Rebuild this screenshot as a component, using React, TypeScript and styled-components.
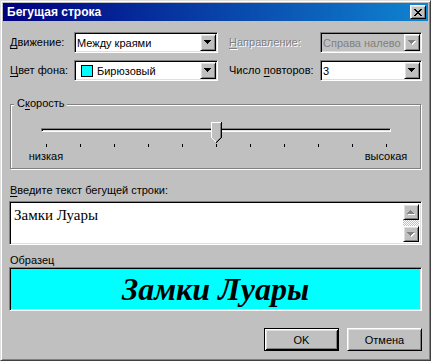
import React from "react";
import styled, { createGlobalStyle, css } from "styled-components";

const GlobalStyle = createGlobalStyle`
  html, body { margin: 0; padding: 0; background: #c0c0c0; }
  * { box-sizing: border-box; }
`;

const raised = css`
  border: 1px solid;
  border-color: #fff #000 #000 #fff;
  box-shadow: inset 1px 1px #dfdfdf, inset -1px -1px #808080;
`;

const sunken = css`
  border: 1px solid;
  border-color: #808080 #fff #fff #808080;
  box-shadow: inset 1px 1px #000, inset -1px -1px #dfdfdf;
`;

const Window = styled.div`
  width: 431px;
  height: 361px;
  background: #c0c0c0;
  border: 1px solid;
  border-color: #dfdfdf #404040 #404040 #dfdfdf;
  box-shadow: inset 1px 1px #fff, inset -1px -1px #808080;
  padding: 2px;
  display: flex;
  flex-direction: column;
  font-family: "Liberation Sans", Arial, sans-serif;
  font-size: 11px;
  color: #000;
`;

const TitleBar = styled.div`
  height: 18px;
  flex: none;
  display: flex;
  align-items: center;
  justify-content: space-between;
  padding: 0 2px 0 4px;
  background: linear-gradient(to right, #000080, #1084d0);
`;

const TitleText = styled.span`
  color: #fff;
  font-weight: bold;
  font-size: 12px;
  line-height: 18px;
  white-space: nowrap;
`;

const CloseButton = styled.div`
  width: 16px;
  height: 14px;
  background: #c0c0c0;
  ${raised};
  display: flex;
  align-items: center;
  justify-content: center;
`;

const Body = styled.div`
  flex: 1;
  display: flex;
  flex-direction: column;
  padding: 11px 6px 0 6px;
`;

const FormGrid = styled.div`
  display: grid;
  grid-template-columns: 65px 144px 102px 102px;
  grid-auto-rows: 21px;
  row-gap: 7px;
  align-items: center;
`;

const Label = styled.label<{ $indent?: number; $disabled?: boolean }>`
  padding-left: ${(p) => p.$indent ?? 1}px;
  white-space: nowrap;
  line-height: 13px;
  color: ${(p) => (p.$disabled ? "#808080" : "#000")};
  text-shadow: ${(p) => (p.$disabled ? "1px 1px 0 #fff" : "none")};
  u { text-decoration-thickness: 1px; text-underline-offset: 2px; }
`;

const Combo = styled.div<{ $disabled?: boolean }>`
  height: 21px;
  display: flex;
  align-items: stretch;
  padding: 1px;
  background: ${(p) => (p.$disabled ? "#c0c0c0" : "#fff")};
  ${sunken};
`;

const ComboValue = styled.div<{ $disabled?: boolean }>`
  flex: 1;
  display: flex;
  align-items: center;
  padding-left: 1px;
  white-space: nowrap;
  overflow: hidden;
  color: ${(p) => (p.$disabled ? "#808080" : "#000")};
`;

const Swatch = styled.span<{ $color: string }>`
  width: 12px;
  height: 12px;
  border: 1px solid #000;
  background: ${(p) => p.$color};
  margin: 0 4px 0 4px;
  flex: none;
`;

const DropButton = styled.div`
  width: 16px;
  flex: none;
  background: #c0c0c0;
  ${raised};
  display: flex;
  align-items: center;
  justify-content: center;
`;

const GroupBox = styled.div`
  position: relative;
  margin: 23px 1px 0 1px;
  border: 1px solid #808080;
  box-shadow: inset 1px 1px #fff, 1px 1px #fff;
  padding: 17px 0 5px 0;
`;

const GroupCaption = styled.span`
  position: absolute;
  top: -8px;
  left: 3px;
  padding: 0 2px 0 3px;
  background: #c0c0c0;
  line-height: 13px;
  u { text-decoration-thickness: 1px; text-underline-offset: 2px; }
`;

const SliderArea = styled.div`
  position: relative;
  margin-left: 30px;
  width: 350px;
  padding-top: 6px;
`;

const Track = styled.div`
  height: 4px;
  ${sunken};
`;

const Ticks = styled.div`
  margin: 12px 0 0 5px;
  width: 341px;
  height: 3px;
  display: flex;
  justify-content: space-between;
`;

const Tick = styled.span`
  width: 1px;
  height: 3px;
  background: #000;
`;

const ThumbWrap = styled.div`
  position: absolute;
  top: 0;
  width: 11px;
  height: 21px;
  line-height: 0;
`;

const ScaleLabels = styled.div`
  margin: 3px 0 0 5px;
  width: 400px;
  display: flex;
  justify-content: space-between;
  line-height: 13px;
`;

const ScaleLabel = styled.span`
  width: 60px;
  text-align: center;
`;

const FieldCaption = styled.div<{ $top: number; $bottom: number }>`
  margin: ${(p) => p.$top}px 0 ${(p) => p.$bottom}px 0;
  padding-left: 1px;
  line-height: 13px;
  u { text-decoration-thickness: 1px; text-underline-offset: 2px; }
`;

const TextArea = styled.div`
  height: 44px;
  display: flex;
  padding: 2px;
  background: #fff;
  ${sunken};
`;

const TextContent = styled.div`
  flex: 1;
  padding: 3px 2px;
  font-family: "Liberation Serif", "Times New Roman", serif;
  font-size: 15px;
  line-height: 17px;
`;

const ScrollBar = styled.div`
  width: 16px;
  display: flex;
  flex-direction: column;
`;

const ScrollButton = styled.div`
  width: 16px;
  height: 16px;
  background: #c0c0c0;
  ${raised};
  display: flex;
  align-items: center;
  justify-content: center;
`;

const ScrollTrack = styled.div`
  flex: 1;
  background: repeating-conic-gradient(#fff 0 25%, #c0c0c0 0 50%) 0 0 / 2px 2px;
`;

const Sample = styled.div`
  height: 44px;
  background: #00ffff;
  ${sunken};
  display: flex;
  align-items: center;
  justify-content: center;
  font-family: "Liberation Serif", "Times New Roman", serif;
  font-weight: bold;
  font-style: italic;
  font-size: 32px;
  line-height: 1;
`;

const ButtonRow = styled.div`
  margin-top: 17px;
  display: flex;
  justify-content: flex-end;
  gap: 8px;
`;

const Button = styled.button<{ $default?: boolean }>`
  width: 75px;
  height: 23px;
  padding: 0;
  font-family: "Liberation Sans", Arial, sans-serif;
  font-size: 11px;
  color: #000;
  background: #c0c0c0;
  border: 1px solid;
  border-color: ${(p) => (p.$default ? "#000" : "#fff #000 #000 #fff")};
  box-shadow: ${(p) =>
    p.$default
      ? "inset 1px 1px #fff, inset -1px -1px #000, inset 2px 2px #dfdfdf, inset -2px -2px #808080"
      : "inset 1px 1px #dfdfdf, inset -1px -1px #808080"};
`;

const Arrow: React.FC<{ down?: boolean; disabled?: boolean }> = ({ down = true, disabled }) => {
  const d = down
    ? "M0 0h7v1h-1v1h-1v1h-1v1h-1v-1h-1v-1h-1v-1h-1z"
    : "M3 0h1v1h1v1h1v1h1v1h-7v-1h1v-1h1v-1h1z";
  return (
    <svg width="8" height="5" viewBox="0 0 8 5" shapeRendering="crispEdges">
      {disabled && <path d={d} fill="#fff" transform="translate(1 1)" />}
      <path d={d} fill={disabled ? "#808080" : "#000"} />
    </svg>
  );
};

const CloseIcon = () => (
  <svg width="8" height="7" viewBox="0 0 8 7" shapeRendering="crispEdges">
    <path
      d="M0 0h2v1h1v1h2v-1h1v-1h2v1h-1v1h-1v1h-1v1h1v1h1v1h1v1h-2v-1h-1v-1h-2v1h-1v1h-2v-1h1v-1h1v-1h1v-1h-1v-1h-1v-1h-1z"
      fill="#000"
    />
  </svg>
);

const Thumb = () => (
  <svg width="11" height="21" viewBox="0 0 11 21" shapeRendering="crispEdges">
    <polygon points="0,0 11,0 11,16 5.5,21 0,16" fill="#c0c0c0" />
    <rect x="0" y="0" width="10" height="1" fill="#fff" />
    <rect x="0" y="0" width="1" height="16" fill="#fff" />
    <rect x="10" y="0" width="1" height="16" fill="#000" />
    <rect x="9" y="1" width="1" height="15" fill="#808080" />
    <rect x="1" y="16" width="1" height="1" fill="#fff" />
    <rect x="2" y="17" width="1" height="1" fill="#fff" />
    <rect x="3" y="18" width="1" height="1" fill="#fff" />
    <rect x="4" y="19" width="1" height="1" fill="#fff" />
    <rect x="9" y="16" width="1" height="1" fill="#000" />
    <rect x="8" y="17" width="1" height="1" fill="#000" />
    <rect x="7" y="18" width="1" height="1" fill="#000" />
    <rect x="6" y="19" width="1" height="1" fill="#000" />
    <rect x="5" y="20" width="1" height="1" fill="#000" />
    <rect x="8" y="16" width="1" height="1" fill="#808080" />
    <rect x="7" y="17" width="1" height="1" fill="#808080" />
    <rect x="6" y="18" width="1" height="1" fill="#808080" />
    <rect x="5" y="19" width="1" height="1" fill="#808080" />
  </svg>
);

const TICKS = 11;
const SPEED = 5;

export default function App() {
  const thumbLeft = 5 + SPEED * 34 - 5;
  return (
    <>
      <GlobalStyle />
      <Window>
        <TitleBar>
          <TitleText>Бегущая строка</TitleText>
          <CloseButton>
            <CloseIcon />
          </CloseButton>
        </TitleBar>
        <Body>
          <FormGrid>
            <Label>
              <u>Д</u>вижение:
            </Label>
            <Combo>
              <ComboValue>Между краями</ComboValue>
              <DropButton>
                <Arrow />
              </DropButton>
            </Combo>
            <Label $indent={11} $disabled>
              <u>Н</u>аправление:
            </Label>
            <Combo $disabled>
              <ComboValue $disabled>Справа налево</ComboValue>
              <DropButton>
                <Arrow disabled />
              </DropButton>
            </Combo>
            <Label>
              <u>Ц</u>вет фона:
            </Label>
            <Combo>
              <ComboValue>
                <Swatch $color="#00ffff" />
                Бирюзовый
              </ComboValue>
              <DropButton>
                <Arrow />
              </DropButton>
            </Combo>
            <Label $indent={11}>
              Число <u>п</u>овторов:
            </Label>
            <Combo>
              <ComboValue>3</ComboValue>
              <DropButton>
                <Arrow />
              </DropButton>
            </Combo>
          </FormGrid>

          <GroupBox>
            <GroupCaption>
              С<u>к</u>орость
            </GroupCaption>
            <SliderArea>
              <Track />
              <Ticks>
                {Array.from({ length: TICKS }).map((_, i) => (
                  <Tick key={i} />
                ))}
              </Ticks>
              <ThumbWrap style={{ left: thumbLeft }}>
                <Thumb />
              </ThumbWrap>
            </SliderArea>
            <ScaleLabels>
              <ScaleLabel>низкая</ScaleLabel>
              <ScaleLabel>высокая</ScaleLabel>
            </ScaleLabels>
          </GroupBox>

          <FieldCaption $top={15} $bottom={4}>
            <u>В</u>ведите текст бегущей строки:
          </FieldCaption>
          <TextArea>
            <TextContent>Замки Луары</TextContent>
            <ScrollBar>
              <ScrollButton>
                <Arrow down={false} disabled />
              </ScrollButton>
              <ScrollTrack />
              <ScrollButton>
                <Arrow disabled />
              </ScrollButton>
            </ScrollBar>
          </TextArea>

          <FieldCaption $top={9} $bottom={0}>
            Образец
          </FieldCaption>
          <Sample>Замки Луары</Sample>

          <ButtonRow>
            <Button $default>OK</Button>
            <Button>Отмена</Button>
          </ButtonRow>
        </Body>
      </Window>
    </>
  );
}
